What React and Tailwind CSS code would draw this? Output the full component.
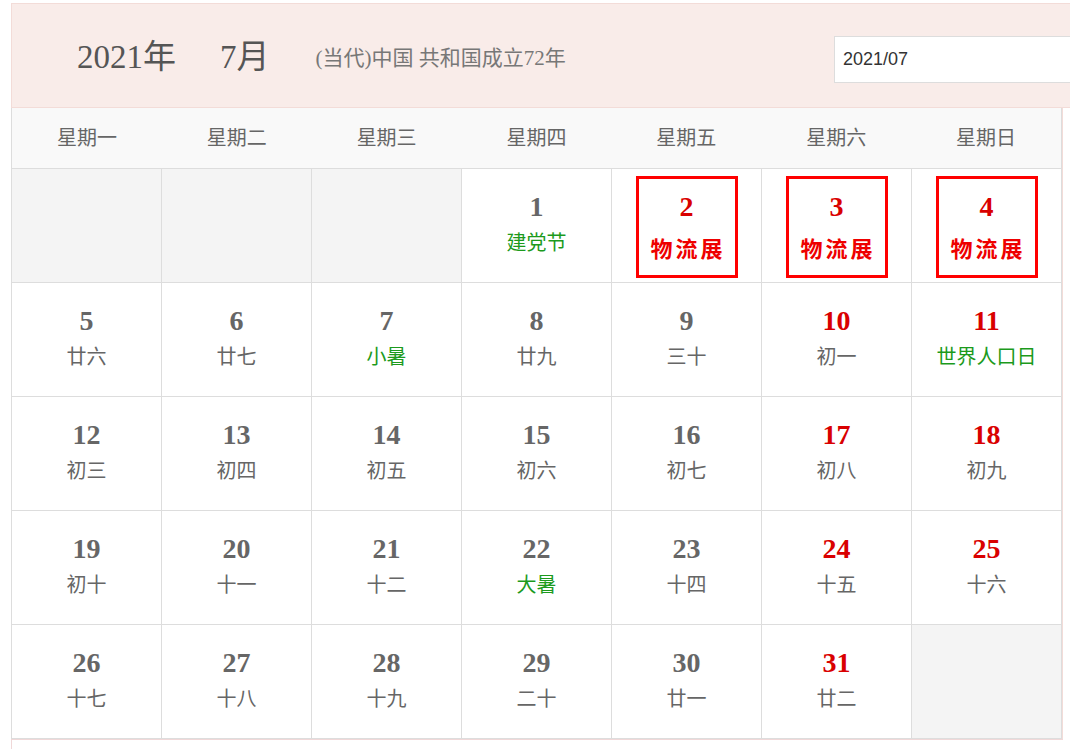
const weekdays = ["星期一", "星期二", "星期三", "星期四", "星期五", "星期六", "星期日"];

// type: "empty" | "fest" (red box) | day with lunar text
const rows = [
  [
    { empty: true },
    { empty: true },
    { empty: true },
    { d: 1, sub: "建党节", green: true },
    { d: 2, box: "物流展" },
    { d: 3, box: "物流展" },
    { d: 4, box: "物流展" },
  ],
  [
    { d: 5, sub: "廿六" },
    { d: 6, sub: "廿七" },
    { d: 7, sub: "小暑", green: true },
    { d: 8, sub: "廿九" },
    { d: 9, sub: "三十" },
    { d: 10, sub: "初一" },
    { d: 11, sub: "世界人口日", green: true },
  ],
  [
    { d: 12, sub: "初三" },
    { d: 13, sub: "初四" },
    { d: 14, sub: "初五" },
    { d: 15, sub: "初六" },
    { d: 16, sub: "初七" },
    { d: 17, sub: "初八" },
    { d: 18, sub: "初九" },
  ],
  [
    { d: 19, sub: "初十" },
    { d: 20, sub: "十一" },
    { d: 21, sub: "十二" },
    { d: 22, sub: "大暑", green: true },
    { d: 23, sub: "十四" },
    { d: 24, sub: "十五" },
    { d: 25, sub: "十六" },
  ],
  [
    { d: 26, sub: "十七" },
    { d: 27, sub: "十八" },
    { d: 28, sub: "十九" },
    { d: 29, sub: "二十" },
    { d: 30, sub: "廿一" },
    { d: 31, sub: "廿二" },
    { empty: true },
  ],
];

const serif = { fontFamily: '"Liberation Serif", "Noto Sans CJK SC", serif' };

function DayCell({ cell, weekend }) {
  if (cell.empty) {
    return <div className="h-[114px] border-r border-b border-[#dddddd] bg-[#f4f4f4]" />;
  }

  if (cell.box) {
    return (
      <div className="h-[114px] border-r border-b border-[#dddddd] bg-white flex justify-center pt-[7px]">
        <div className="w-[102px] h-[102px] border-[3px] border-[#ff0000] flex flex-col items-center pt-[12px]">
          <div className="text-[28px] leading-[32px] font-bold text-[#d90000]" style={serif}>
            {cell.d}
          </div>
          <div
            className="mt-[10px] text-[22px] leading-[28px] font-bold tracking-[3px] pl-[3px] text-[#ee0000]"
            style={{ fontFamily: '"Noto Sans CJK SC", sans-serif' }}
          >
            {cell.box}
          </div>
        </div>
      </div>
    );
  }

  return (
    <div className="h-[114px] border-r border-b border-[#dddddd] bg-white flex flex-col items-center pt-[22px]">
      <div
        className={`text-[28px] leading-[32px] font-bold ${weekend ? "text-[#d90000]" : "text-[#666666]"}`}
        style={serif}
      >
        {cell.d}
      </div>
      <div
        className={`mt-[8px] text-[20px] leading-[24px] ${cell.green ? "text-[#1c9a1c]" : "text-[#666666]"}`}
        style={serif}
      >
        {cell.sub}
      </div>
    </div>
  );
}

export default function App() {
  return (
    <div className="w-[1070px] h-[749px] overflow-hidden bg-white pl-[11px] pt-[3px]">
      {/* header */}
      <div className="w-[1120px] h-[105px] bg-[#f9ece9] border border-[#f3dcd8] flex items-center">
        <div className="w-[822px] flex items-center text-[#555555] mt-[4px]" style={serif}>
          <span className="ml-[65px] text-[33px] leading-none">2021年</span>
          <span className="ml-[44px] text-[33px] leading-none">7月</span>
          <span className="ml-[46px] text-[21px] leading-none text-[#777777] mt-[2px]">
            (当代)中国 共和国成立72年
          </span>
        </div>
        <div
          className="w-[260px] h-[47px] mt-[7px] bg-white border border-[#dddddd] flex items-center pl-[8px] text-[18px] text-[#333333]"
          style={{ fontFamily: '"Liberation Sans", Arial, sans-serif' }}
        >
          2021/07
        </div>
      </div>

      {/* calendar table */}
      <div className="flex">
        <div className="w-[1051px] border-l border-[#dddddd]">
          <div className="grid grid-cols-7 h-[61px] bg-[#f9f9f9] border-b border-r border-[#dddddd]">
            {weekdays.map((w) => (
              <div
                key={w}
                className="flex items-center justify-center text-[20px] text-[#666666]"
                style={serif}
              >
                {w}
              </div>
            ))}
          </div>
          {rows.map((row, ri) => (
            <div key={ri} className="grid grid-cols-7">
              {row.map((cell, ci) => (
                <DayCell key={ci} cell={cell} weekend={ci >= 5} />
              ))}
            </div>
          ))}
        </div>
        <div className="w-px bg-[#f3dcd8]" />
      </div>
      <div className="w-[1052px] h-[12px] border-t border-l border-[#f0d8d8]" />
    </div>
  );
}
